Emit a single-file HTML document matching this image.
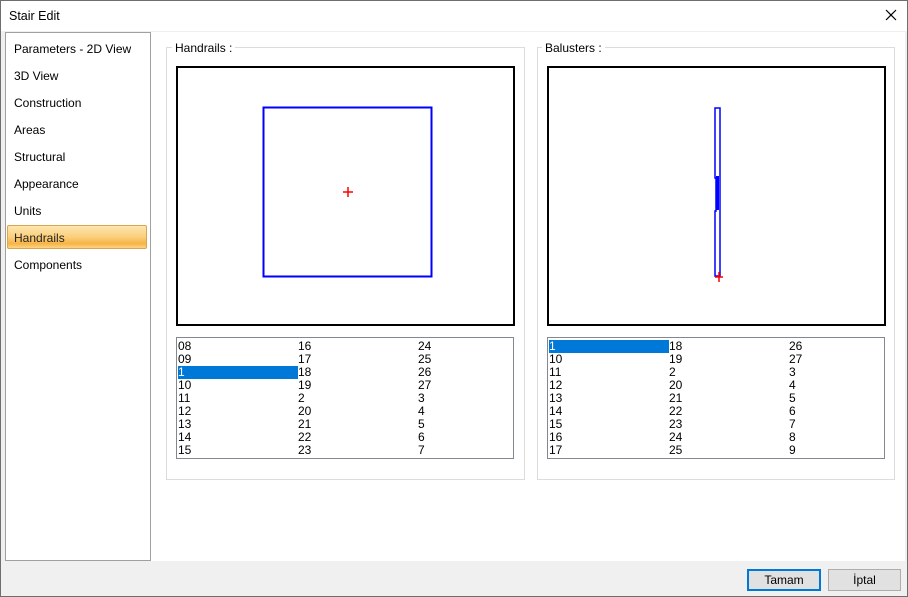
<!DOCTYPE html>
<html><head><meta charset="utf-8"><style>
*{margin:0;padding:0;box-sizing:border-box}
body{width:908px;height:597px;overflow:hidden;background:#f0f0f0;font-family:"Liberation Sans",sans-serif;font-size:12px;color:#000;position:relative}
.abs{position:absolute}
.win{left:0;top:0;width:908px;height:597px;border:1px solid #6e6e6e}
.title{left:1px;top:1px;width:906px;height:30px;background:#fff}
.nav{left:5px;top:32px;width:146px;height:529px;background:#fff;border:1px solid #a0a0a0}
.nav div{position:absolute;left:8px;font-size:12px}
.main{left:151px;top:32px;width:754px;height:529px;background:#fff}
.grp{border:1px solid #dcdcdc}
.cv{border:2px solid #000;background:#fff}
.lb{border:1px solid #828790;background:#fff}
.lb span{position:absolute;font-size:12px;line-height:13px}
.sel{background:#0078d7;color:#fff}
.btn{background:#e1e1e1;border:1px solid #adadad;text-align:center;line-height:20px;font-size:12px}
</style></head><body>
<div class="abs win"></div>
<div class="abs title"></div>
<div class="abs" style="left:9px;top:9px;font-size:12.5px">Stair Edit</div>
<svg class="abs" style="left:884px;top:8px" width="14" height="14"><path d="M2 2L12 12M12 2L2 12" stroke="#000" stroke-width="1.2"/></svg>
<div class="abs nav">
<div style="top:9px">Parameters - 2D View</div>
<div style="top:36px">3D View</div>
<div style="top:63px">Construction</div>
<div style="top:90px">Areas</div>
<div style="top:117px">Structural</div>
<div style="top:144px">Appearance</div>
<div style="top:171px">Units</div>
<div style="left:1px;top:192px;width:140px;height:24px;border:1px solid #d9a54e;border-radius:2px;background:linear-gradient(#fde6b0,#fbcf7c 50%,#f7b345 80%,#fbd587)"></div>
<div style="top:198px;color:#222">Handrails</div>
<div style="top:225px">Components</div>
</div>
<div class="abs main"></div>

<div class="abs grp" style="left:166px;top:47px;width:359px;height:433px"></div>
<div class="abs" style="left:172px;top:41px;background:#fff;padding:0 3px;font-size:12px">Handrails :</div>
<div class="abs cv" style="left:176px;top:66px;width:339px;height:260px"></div>
<svg class="abs" style="left:176px;top:66px" width="339" height="260">
<rect x="87.5" y="41.5" width="168" height="169" fill="none" stroke="#0000ff" stroke-width="2"/>
<path d="M172 121v10M167 126h10" stroke="#f00" stroke-width="1.5"/>
</svg>
<div class="abs lb" style="left:176px;top:337px;width:338px;height:122px">
<span style="left:1px;top:2px">08<br>09<br><b class="sel" style="display:inline-block;width:120px;font-weight:normal">1</b><br>10<br>11<br>12<br>13<br>14<br>15</span>
<span style="left:121px;top:2px">16<br>17<br>18<br>19<br>2<br>20<br>21<br>22<br>23</span>
<span style="left:241px;top:2px">24<br>25<br>26<br>27<br>3<br>4<br>5<br>6<br>7</span>
</div>

<div class="abs grp" style="left:537px;top:47px;width:358px;height:433px"></div>
<div class="abs" style="left:542px;top:41px;background:#fff;padding:0 3px;font-size:12px">Balusters :</div>
<div class="abs cv" style="left:547px;top:66px;width:339px;height:260px"></div>
<svg class="abs" style="left:547px;top:66px" width="339" height="260">
<path d="M168 42h5v168h-5v-65h1v-33h-1z" fill="none" stroke="#0000ff" stroke-width="1.5"/>
<rect x="169" y="110" width="3" height="34" fill="#0000ff"/>
<path d="M172 206v10M168 211h8" stroke="#f00" stroke-width="1.5"/>
</svg>
<div class="abs lb" style="left:547px;top:337px;width:338px;height:122px">
<span style="left:1px;top:2px"><b class="sel" style="display:inline-block;width:120px;font-weight:normal">1</b><br>10<br>11<br>12<br>13<br>14<br>15<br>16<br>17</span>
<span style="left:121px;top:2px">18<br>19<br>2<br>20<br>21<br>22<br>23<br>24<br>25</span>
<span style="left:241px;top:2px">26<br>27<br>3<br>4<br>5<br>6<br>7<br>8<br>9</span>
</div>

<div class="abs btn" style="left:747px;top:569px;width:74px;height:22px;border:2px solid #0078d7;line-height:18px">Tamam</div>
<div class="abs btn" style="left:828px;top:569px;width:73px;height:22px">İptal</div>
</body></html>
